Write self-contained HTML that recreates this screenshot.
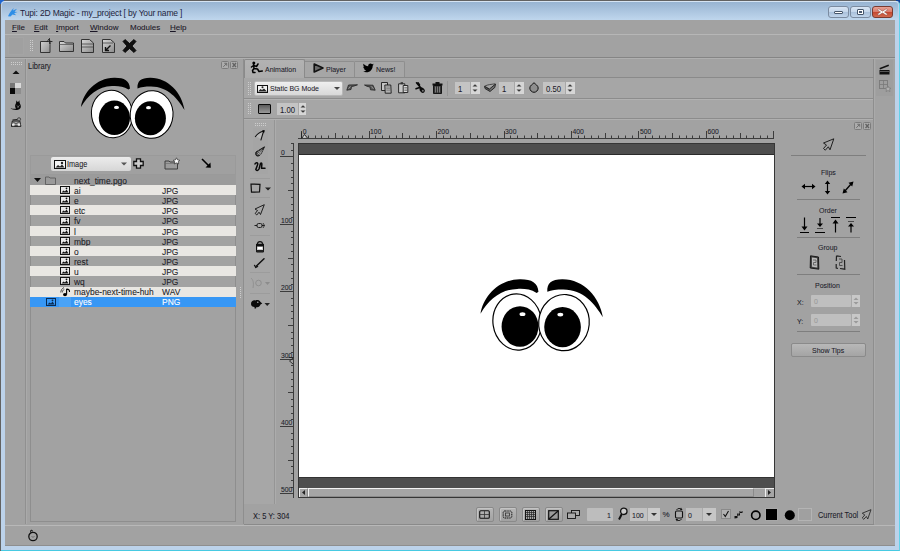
<!DOCTYPE html>
<html><head><meta charset="utf-8">
<style>
*{margin:0;padding:0;box-sizing:border-box}
html,body{width:900px;height:551px;overflow:hidden;background:#626262}
body{font-family:"Liberation Sans",sans-serif;font-size:8px;color:#1c1c26;position:relative}
.a{position:absolute}
.t{position:absolute;white-space:pre;line-height:1;-webkit-text-stroke:0.07px currentColor}
svg{position:absolute;overflow:visible}
#win{left:1px;top:1px;width:899px;height:550px;background:#bcd2ea;border-radius:4px 4px 0 0;border-top:1px solid #d6e4f3;border-right:1px solid #62d2ea;border-bottom:1px solid #48cae2}
#title{left:2px;top:2px;width:896px;height:18px;background:linear-gradient(#98b4d2,#bfd6ed);border-radius:3px 3px 0 0}
#client{left:5px;top:20px;width:890px;height:526px;background:#a2a2a2}
.hl{height:1px}
.vl{width:1px}
.grip{background-image:radial-gradient(circle,#cfcfcf 0.6px,transparent 0.9px);background-size:2px 2px}
.mn{top:24px;color:#1a1626}
u{text-decoration:underline;text-underline-offset:1px}
.rl{font-size:6.8px;color:#1c1c2a;text-decoration:none}
.pl{font-size:7.84px;color:#1c1c2a;margin-top:-0.5px;transform:scaleX(0.893);transform-origin:0 0}
.row{position:absolute;left:30px;width:206px;height:10px}
.row .t{top:1.8px;font-size:8.45px}
</style></head><body>
<svg width="0" height="0" style="left:0;top:0"><defs><pattern id="gp" width="2" height="2" patternUnits="userSpaceOnUse"><rect x="0" y="0" width="1" height="1" fill="#cdcdcd"/></pattern></defs></svg>
<div class="a" style="left:-3px;top:-3px;width:7px;height:7px;border-radius:50%;background:#1f66d0"></div>
<div class="a" style="left:896px;top:-3px;width:7px;height:6px;border-radius:50%;background:#0c3f96"></div>
<div id="win" class="a"></div>
<div id="title" class="a"></div>
<!-- app icon -->
<svg style="left:6.5px;top:7.5px" width="11" height="9" viewBox="0 0 13 11"><path d="M1 10 C3 6 5 3 8 0 L7 3 L12 1 L9 4.5 L12.5 5 L8.5 6.5 L11 9 L6.5 8 L4 10.5 Z" fill="#2e8ee6"/></svg>
<div class="t" style="left:20px;top:8.5px;font-size:8.5px;letter-spacing:-0.17px;color:#1e1e3c;-webkit-text-stroke:0">Tupi: 2D Magic - my_project [ by Your name ]</div>
<!-- title buttons -->
<div class="a" style="left:828px;top:6px;width:21px;height:12px;border:1px solid #7b8ba0;border-radius:3px;background:linear-gradient(#d9e6f4 0,#c3d5ea 50%,#a9c0da 51%,#c0d4ea 100%)"></div>
<div class="a" style="left:834px;top:11px;width:9px;height:3px;background:#fff;border:1px solid #46566a;border-radius:1px"></div>
<div class="a" style="left:850px;top:6px;width:21px;height:12px;border:1px solid #7b8ba0;border-radius:3px;background:linear-gradient(#d9e6f4 0,#c3d5ea 50%,#a9c0da 51%,#c0d4ea 100%)"></div>
<div class="a" style="left:857px;top:9px;width:7px;height:6px;background:#fff;border:1px solid #46566a;border-radius:1px"></div>
<div class="a" style="left:859px;top:11px;width:3px;height:2px;background:#4a5a70"></div>
<div class="a" style="left:872px;top:6px;width:21px;height:12px;border:1px solid #7a3a30;border-radius:3px;background:linear-gradient(#e8a294 0,#d8796a 50%,#c4452e 51%,#d06a50 100%)"></div>
<svg style="left:877px;top:8px" width="11" height="8" viewBox="0 0 11 8"><path d="M1.8 0.8 L5.5 3.2 L9.2 0.8 L10.5 2 L7.5 4 L10.5 6 L9.2 7.3 L5.5 4.9 L1.8 7.3 L0.5 6 L3.5 4 L0.5 2 Z" fill="#fff" stroke="#7a4038" stroke-width="0.5" stroke-linejoin="round"/></svg>

<div id="client" class="a"></div>

<!-- menu bar -->
<div class="a hl" style="left:5px;top:34px;width:890px;background:#b6b6b6"></div>
<div class="t mn" style="left:12px"><u>F</u>ile</div>
<div class="t mn" style="left:34px"><u>E</u>dit</div>
<div class="t mn" style="left:56px"><u>I</u>mport</div>
<div class="t mn" style="left:90px"><u>W</u>indow</div>
<div class="t mn" style="left:130px">Modules</div>
<div class="t mn" style="left:170px"><u>H</u>elp</div>

<!-- toolbar -->
<div class="a" style="left:8px;top:37px;width:16px;height:18px;background:#a0a0a0;border:1px solid #a4a4a4"></div>
<svg style="left:30px;top:40px" width="4" height="12"><rect width="4" height="12" fill="url(#gp)"/></svg>


<!-- toolbar icons -->
<svg style="left:39px;top:38px" width="15" height="16" viewBox="0 0 15 16"><defs><linearGradient id="gd" x1="0" y1="0" x2="1" y2="1"><stop offset="0" stop-color="#d8d8d8"/><stop offset="1" stop-color="#8a8a8a"/></linearGradient></defs><path d="M1.5 3.5 H9 V2 L10 1 L10.5 3 L12.5 3.5 L10.8 4.4 L11.5 6 L11 6.5 V14.5 H1.5 Z" fill="url(#gd)" stroke="#333" stroke-width="1"/><path d="M10.5 0 V6 M7.5 3.5 H13.5" stroke="#222" stroke-width="0.8"/></svg>
<svg style="left:58px;top:39px" width="17" height="14" viewBox="0 0 17 14"><path d="M1.5 2.5 H6 L7.5 4 H15.5 V12.5 H1.5 Z" fill="url(#gd)" stroke="#333" stroke-width="1"/><path d="M1.5 5.5 H15.5" stroke="#555" stroke-width="0.8"/></svg>
<svg style="left:80px;top:38px" width="15" height="16" viewBox="0 0 15 16"><path d="M1.5 1.5 H9.5 L13.5 5 V14.5 H1.5 Z" fill="url(#gd)" stroke="#333" stroke-width="1"/><path d="M2 6 H13 M2 9 H13" stroke="#444" stroke-width="0.8"/></svg>
<svg style="left:101px;top:38px" width="15" height="16" viewBox="0 0 15 16"><path d="M1.5 1.5 H9.5 L13.5 5 V14.5 H1.5 Z" fill="url(#gd)" stroke="#333" stroke-width="1"/><path d="M2 5 H12" stroke="#444" stroke-width="0.8"/><path d="M9.5 7.5 L5 12 M4.5 9 V12.5 H8" stroke="#111" stroke-width="1.4" fill="none"/></svg>
<svg style="left:122px;top:38px" width="15" height="16" viewBox="0 0 15 16"><path d="M3 1.5 L7.5 5.5 L12 1.5 L14 3.5 L10 8 L14 12.5 L12 14.5 L7.5 10.5 L3 14.5 L1 12.5 L5 8 L1 3.5 Z" fill="#111" stroke="#000" stroke-width="0.8" stroke-linejoin="round"/></svg>

<!-- left dock -->
<div class="a vl" style="left:25px;top:59px;height:465px;background:#909090"></div>
<div class="a vl" style="left:26px;top:59px;height:465px;background:#aaaaaa"></div>
<svg style="left:11px;top:62px" width="12" height="4"><rect width="12" height="4" fill="url(#gp)"/></svg>
<svg style="left:12px;top:70px" width="8" height="5" viewBox="0 0 8 5"><path d="M0.5 4 L4 0.5 L7.5 4 Z" fill="#111"/></svg>
<div class="a" style="left:10px;top:83px;width:5px;height:5px;background:#777"></div>
<div class="a" style="left:15px;top:83px;width:6px;height:5px;background:#dadada"></div>
<div class="a" style="left:10px;top:88px;width:5px;height:6px;background:#0a0a0a"></div>
<div class="a" style="left:15px;top:88px;width:6px;height:6px;background:#8e8e8e"></div>
<svg style="left:10px;top:100px" width="12" height="11" viewBox="0 0 12 11"><path d="M0.5 8 C2 9.8 5.5 10.3 8 9.8 C10 9.3 11.2 7.8 10.8 5.8 C10.5 4.4 9.8 3.7 9.6 2.6 L9.4 0.3 L8.4 1.8 L7.2 1.8 L6.4 0.3 L6.1 2.8 C5.9 4 5.1 4.8 5.1 6 C5.1 7.2 5.6 8 6.1 8.6 C4.2 9 2.5 8.9 0.5 8 Z" fill="#0a0a0a"/><path d="M7 5.5 L8 6.8 L9.5 5.5 M8 6.8 V8" stroke="#8a8a8a" stroke-width="0.8" fill="none"/></svg>
<svg style="left:10px;top:117px" width="12" height="10" viewBox="0 0 12 10"><path d="M1.5 9 L2.3 4 L9.8 4 L10.8 9 Z" fill="none" stroke="#1a1a1a" stroke-width="1"/><path d="M2.5 3 L7.5 2.5" stroke="#1a1a1a" stroke-width="1.1"/><circle cx="9" cy="2.3" r="1.6" fill="#9a9a9a" stroke="#333" stroke-width="0.8"/><path d="M2.5 4.5 L6 7 L9.5 4.5" fill="none" stroke="#333" stroke-width="0.7"/><circle cx="3.3" cy="8" r="1.4" fill="#e8e8e8"/><circle cx="9" cy="8" r="1.4" fill="#e8e8e8"/><path d="M1 9.3 H11.2" stroke="#1a1a1a" stroke-width="0.9"/></svg>

<!-- library panel -->
<div class="t" style="left:28px;top:62.00px;font-size:8.40px;transform:scaleX(0.893);transform-origin:0 0">Library</div>
<div class="a" style="left:221px;top:61px;width:8px;height:8px;border:1px solid #7c7c7c;border-radius:1.5px;background:#acacac"></div>
<div class="a" style="left:230px;top:61px;width:8px;height:8px;border:1px solid #7c7c7c;border-radius:1.5px;background:#acacac"></div>
<svg style="left:221px;top:61px" width="18" height="8" viewBox="0 0 18 8"><path d="M2.3 5.8 L5.7 2.3 M3.3 2.3 H5.7 V4.7" stroke="#6e6e6e" stroke-width="1" fill="none"/><path d="M11.5 2 L15 6 M15 2 L11.5 6" stroke="#626262" stroke-width="1.3"/></svg>
<div class="a vl" style="left:243px;top:59px;height:465px;background:#8e8e8e"></div>

<svg id="eyesL" style="left:78px;top:76px" width="110" height="65" viewBox="0 0 110 65">
<g id="eyes">
<path d="M3 31 C5 17 18 2 36 1.8 C46 1.6 51.5 4.5 52 12.5 L50.5 13.5 C45 10 40 9.8 34 10 C20 10.5 10 19 3 31 Z" fill="#000"/>
<path d="M59.5 12.5 C59 5 63 2 72 1.8 C90 1.5 104 17 106.5 34 C100 23 90 10.5 73 10.5 C67 10.5 63 11 59.5 12.5 Z" fill="#000"/>
<ellipse cx="34" cy="38" rx="20.5" ry="23.8" transform="rotate(-8 34 38)" fill="#fff" stroke="#000" stroke-width="1"/>
<ellipse cx="73.6" cy="38.5" rx="21.4" ry="23.8" transform="rotate(5 73.6 38.5)" fill="#fff" stroke="#000" stroke-width="1"/>
<ellipse cx="36.4" cy="41.8" rx="15.6" ry="17.2" fill="#000"/>
<ellipse cx="72.4" cy="42.3" rx="15.5" ry="17" fill="#000"/>
<ellipse cx="38.5" cy="31.4" rx="2.5" ry="1.6" fill="#fff"/>
<ellipse cx="70.5" cy="31.7" rx="2.5" ry="1.6" fill="#fff"/>
</g></svg>

<div class="a" style="left:30px;top:155px;width:206px;height:20px;border:1px solid #9a9a9a;background:#a0a0a0"></div>
<div class="a" style="left:51px;top:157px;width:80px;height:14px;border-radius:2px;background:linear-gradient(#ececec,#d6d6d6)"></div>
<svg style="left:54px;top:160px" width="12" height="9" viewBox="0 0 12 9"><rect x="0.5" y="0.5" width="11" height="8" fill="#f4f4f4" stroke="#111"/><path d="M1.5 7.5 L4 5 L6 6.5 L8 4.5 L10.5 7.5 Z" fill="#222"/><circle cx="8" cy="3" r="1.2" fill="#222"/></svg>
<div class="t" style="left:67px;top:161.00px;font-size:8.18px;transform:scaleX(0.893);transform-origin:0 0">Image</div>
<svg style="left:121px;top:162px" width="6" height="4" viewBox="0 0 6 4"><path d="M0 0.5 H6 L3 3.5 Z" fill="#555"/></svg>
<svg style="left:133px;top:158px" width="11" height="11" viewBox="0 0 11 11"><path d="M3.5 0.8 H7.5 V3.5 H10.2 V7.5 H7.5 V10.2 H3.5 V7.5 H0.8 V3.5 H3.5 Z" fill="#ccc" stroke="#111" stroke-width="1.3"/></svg>
<svg style="left:164px;top:157px" width="17" height="13" viewBox="0 0 17 13"><path d="M1 4 H5 L6 5 H13.5 V12 H1 Z" fill="#9c9c9c" stroke="#333" stroke-width="0.9"/><path d="M1.3 6.5 H13.2" stroke="#666" stroke-width="0.6"/><path d="M12.5 0.8 L13.6 3 L15.8 3.3 L14.2 4.8 L14.7 7 L12.5 5.9 L10.3 7 L10.8 4.8 L9.2 3.3 L11.4 3 Z" fill="#fff" stroke="#333" stroke-width="0.7"/></svg>
<svg style="left:201px;top:158px" width="11" height="11" viewBox="0 0 11 11"><path d="M1 1 L8 8" stroke="#000" stroke-width="1.6"/><path d="M4.5 9.5 L9.8 9.8 L9.5 4.5 Z" fill="#000"/></svg>

<!-- tree -->
<div class="a" style="left:30px;top:175px;width:206px;height:347px;border:1px solid #8e8e8e;border-top:none"></div>
<div class="a" style="left:30px;top:175px;width:206px;height:10px;background:#9b9b9b"></div>
<svg style="left:34px;top:178px" width="7" height="4" viewBox="0 0 7 4"><path d="M0 0 H7 L3.5 4 Z" fill="#111"/></svg>
<svg style="left:45px;top:176px" width="11" height="9" viewBox="0 0 11 9"><path d="M0.5 1 H4 L5 2 H10.5 V8.5 H0.5 Z" fill="#9a9a9a" stroke="#555" stroke-width="0.8"/></svg>
<div class="t" style="left:74px;top:177px;font-size:8.45px;z-index:2">next_time.pgo</div>

<div class="row" style="top:185.20px;background:#e9e7e3"><svg style="left:30px;top:1px" width="10" height="8" viewBox="0 0 10 8"><rect x="0.5" y="0.5" width="9" height="7" fill="#e8e8e8" stroke="#111"/><path d="M1.5 6.5 L3.5 4.5 L5 5.5 L6.5 3.5 L8.5 6.5 Z" fill="#111"/><circle cx="6.5" cy="2.3" r="0.9" fill="#111"/></svg><div class="t" style="left:44px;color:#1c1c26">ai</div><div class="t" style="left:132px;color:#1c1c26">JPG</div></div>
<div class="row" style="top:195.33px;background:transparent"><svg style="left:30px;top:1px" width="10" height="8" viewBox="0 0 10 8"><rect x="0.5" y="0.5" width="9" height="7" fill="#e8e8e8" stroke="#111"/><path d="M1.5 6.5 L3.5 4.5 L5 5.5 L6.5 3.5 L8.5 6.5 Z" fill="#111"/><circle cx="6.5" cy="2.3" r="0.9" fill="#111"/></svg><div class="t" style="left:44px;color:#1c1c26">e</div><div class="t" style="left:132px;color:#1c1c26">JPG</div></div>
<div class="row" style="top:205.46px;background:#e9e7e3"><svg style="left:30px;top:1px" width="10" height="8" viewBox="0 0 10 8"><rect x="0.5" y="0.5" width="9" height="7" fill="#e8e8e8" stroke="#111"/><path d="M1.5 6.5 L3.5 4.5 L5 5.5 L6.5 3.5 L8.5 6.5 Z" fill="#111"/><circle cx="6.5" cy="2.3" r="0.9" fill="#111"/></svg><div class="t" style="left:44px;color:#1c1c26">etc</div><div class="t" style="left:132px;color:#1c1c26">JPG</div></div>
<div class="row" style="top:215.59px;background:transparent"><svg style="left:30px;top:1px" width="10" height="8" viewBox="0 0 10 8"><rect x="0.5" y="0.5" width="9" height="7" fill="#e8e8e8" stroke="#111"/><path d="M1.5 6.5 L3.5 4.5 L5 5.5 L6.5 3.5 L8.5 6.5 Z" fill="#111"/><circle cx="6.5" cy="2.3" r="0.9" fill="#111"/></svg><div class="t" style="left:44px;color:#1c1c26">fv</div><div class="t" style="left:132px;color:#1c1c26">JPG</div></div>
<div class="row" style="top:225.72px;background:#e9e7e3"><svg style="left:30px;top:1px" width="10" height="8" viewBox="0 0 10 8"><rect x="0.5" y="0.5" width="9" height="7" fill="#e8e8e8" stroke="#111"/><path d="M1.5 6.5 L3.5 4.5 L5 5.5 L6.5 3.5 L8.5 6.5 Z" fill="#111"/><circle cx="6.5" cy="2.3" r="0.9" fill="#111"/></svg><div class="t" style="left:44px;color:#1c1c26">l</div><div class="t" style="left:132px;color:#1c1c26">JPG</div></div>
<div class="row" style="top:235.85px;background:transparent"><svg style="left:30px;top:1px" width="10" height="8" viewBox="0 0 10 8"><rect x="0.5" y="0.5" width="9" height="7" fill="#e8e8e8" stroke="#111"/><path d="M1.5 6.5 L3.5 4.5 L5 5.5 L6.5 3.5 L8.5 6.5 Z" fill="#111"/><circle cx="6.5" cy="2.3" r="0.9" fill="#111"/></svg><div class="t" style="left:44px;color:#1c1c26">mbp</div><div class="t" style="left:132px;color:#1c1c26">JPG</div></div>
<div class="row" style="top:245.98px;background:#e9e7e3"><svg style="left:30px;top:1px" width="10" height="8" viewBox="0 0 10 8"><rect x="0.5" y="0.5" width="9" height="7" fill="#e8e8e8" stroke="#111"/><path d="M1.5 6.5 L3.5 4.5 L5 5.5 L6.5 3.5 L8.5 6.5 Z" fill="#111"/><circle cx="6.5" cy="2.3" r="0.9" fill="#111"/></svg><div class="t" style="left:44px;color:#1c1c26">o</div><div class="t" style="left:132px;color:#1c1c26">JPG</div></div>
<div class="row" style="top:256.11px;background:transparent"><svg style="left:30px;top:1px" width="10" height="8" viewBox="0 0 10 8"><rect x="0.5" y="0.5" width="9" height="7" fill="#e8e8e8" stroke="#111"/><path d="M1.5 6.5 L3.5 4.5 L5 5.5 L6.5 3.5 L8.5 6.5 Z" fill="#111"/><circle cx="6.5" cy="2.3" r="0.9" fill="#111"/></svg><div class="t" style="left:44px;color:#1c1c26">rest</div><div class="t" style="left:132px;color:#1c1c26">JPG</div></div>
<div class="row" style="top:266.24px;background:#e9e7e3"><svg style="left:30px;top:1px" width="10" height="8" viewBox="0 0 10 8"><rect x="0.5" y="0.5" width="9" height="7" fill="#e8e8e8" stroke="#111"/><path d="M1.5 6.5 L3.5 4.5 L5 5.5 L6.5 3.5 L8.5 6.5 Z" fill="#111"/><circle cx="6.5" cy="2.3" r="0.9" fill="#111"/></svg><div class="t" style="left:44px;color:#1c1c26">u</div><div class="t" style="left:132px;color:#1c1c26">JPG</div></div>
<div class="row" style="top:276.37px;background:transparent"><svg style="left:30px;top:1px" width="10" height="8" viewBox="0 0 10 8"><rect x="0.5" y="0.5" width="9" height="7" fill="#e8e8e8" stroke="#111"/><path d="M1.5 6.5 L3.5 4.5 L5 5.5 L6.5 3.5 L8.5 6.5 Z" fill="#111"/><circle cx="6.5" cy="2.3" r="0.9" fill="#111"/></svg><div class="t" style="left:44px;color:#1c1c26">wq</div><div class="t" style="left:132px;color:#1c1c26">JPG</div></div>
<div class="row" style="top:286.50px;background:#e9e7e3"><svg style="left:30px;top:0.3px" width="11" height="10" viewBox="0 0 11 10"><path d="M0.8 5.5 C0.8 3.5 1.8 1.5 4 0.6 M2.4 5.4 C2.4 4 3 3 4.3 2.3" fill="none" stroke="#222" stroke-width="0.8"/><ellipse cx="5" cy="7.6" rx="2" ry="1.6" fill="#000"/><path d="M6.6 7.5 V2.2 C8.5 2 9.8 3 9.5 5" fill="none" stroke="#000" stroke-width="1.1"/></svg><div class="t" style="left:44px;color:#1c1c26">maybe-next-time-huh</div><div class="t" style="left:132px;color:#1c1c26">WAV</div></div>
<div class="row" style="top:296.63px;background:#3797f5"><svg style="left:16px;top:1px" width="10" height="8" viewBox="0 0 10 8"><rect x="0.5" y="0.5" width="9" height="7" fill="#3797f5" stroke="#0a2a50"/><path d="M1.5 6.5 L3.5 4.5 L5 5.5 L6.5 3.5 L8.5 6.5 Z" fill="#0a2a50"/><circle cx="6.5" cy="2.3" r="0.9" fill="#0a2a50"/></svg><div class="a" style="left:29px;top:0;width:12px;height:10px;background:#4aa3f7"></div><div class="t" style="left:44px;color:#fff">eyes</div><div class="t" style="left:132px;color:#fff">PNG</div></div>


<!-- ===== center panel ===== -->
<div class="a vl" style="left:873px;top:59px;height:465px;background:#8e8e8e"></div>
<!-- tabs -->
<div class="a hl" style="left:244px;top:77px;width:630px;background:#8a8a8a"></div>
<div class="a" style="left:244px;top:59px;width:61px;height:19px;background:linear-gradient(#b2b2b2,#acacac);border:1px solid #8a8a8a;border-bottom:none;border-radius:2px 2px 0 0"></div>
<div class="a" style="left:305px;top:61px;width:50px;height:16px;background:#a6a6a6;border:1px solid #8e8e8e;border-bottom:none;border-left:none;border-radius:0 2px 0 0"></div>
<div class="a" style="left:355px;top:61px;width:50px;height:16px;background:#a6a6a6;border:1px solid #8e8e8e;border-bottom:none;border-left:none;border-radius:0 2px 0 0"></div>
<svg style="left:250px;top:61px" width="14" height="13" viewBox="0 0 14 13"><circle cx="3.8" cy="1.9" r="1.5" fill="#000"/><path d="M3.6 3.5 L4 7.5 M3.8 4.5 L6.5 5.5 L8 3 M3.5 4.5 L1.5 6 M4 7.5 L2.5 9.5 L3 11.5 L5 11.5 M4 7.5 L7.5 8 L9 10.5 L12.3 10" fill="none" stroke="#000" stroke-width="1.5" stroke-linecap="round" stroke-linejoin="round"/></svg>
<div class="t" style="left:265px;top:66.00px;font-size:7.84px;color:#1c1c2a;transform:scaleX(0.893);transform-origin:0 0">Animation</div>
<svg style="left:313px;top:63px" width="11" height="10" viewBox="0 0 11 10"><path d="M1.2 1 L10 5 L1.2 9 Z" fill="#6a6a6a" stroke="#111" stroke-width="1.6" stroke-linejoin="round"/></svg>
<div class="t" style="left:326px;top:66.00px;font-size:7.84px;color:#1c1c2a;transform:scaleX(0.893);transform-origin:0 0">Player</div>
<svg style="left:363px;top:63px" width="11" height="10" viewBox="0 0 24 20"><path d="M23.6 2.4c-.9.4-1.8.6-2.8.8 1-.6 1.8-1.6 2.1-2.7-.9.6-2 1-3.1 1.2C18.9.6 17.6 0 16.2 0c-2.7 0-4.9 2.2-4.9 4.9 0 .4 0 .8.1 1.1C7.3 5.8 3.7 3.9 1.3.9c-.4.7-.7 1.6-.7 2.5 0 1.7.9 3.2 2.2 4.1-.8 0-1.6-.2-2.2-.6v.1c0 2.4 1.7 4.4 3.9 4.8-.4.1-.8.2-1.3.2-.3 0-.6 0-.9-.1.6 2 2.4 3.4 4.6 3.4-1.7 1.3-3.8 2.1-6.1 2.1-.4 0-.8 0-1.2-.1 2.2 1.4 4.8 2.2 7.5 2.2 9.1 0 14-7.5 14-14v-.6c1-.7 1.8-1.6 2.5-2.5z" fill="#000"/></svg>
<div class="t" style="left:376px;top:66.00px;font-size:7.84px;color:#1c1c2a;transform:scaleX(0.893);transform-origin:0 0">News!</div>

<!-- toolbar row 1 -->
<div class="a hl" style="left:244px;top:78px;width:629px;background:#b4b4b4"></div>
<div class="a" style="left:244px;top:78px;width:629px;height:20px;background:#a6a6a6"></div>
<div class="a hl" style="left:244px;top:98px;width:629px;background:#8c8c8c"></div>
<div class="a hl" style="left:244px;top:99px;width:629px;background:#b2b2b2"></div>
<svg style="left:248px;top:82px" width="4" height="13"><rect width="4" height="13" fill="url(#gp)"/></svg>
<div class="a" style="left:254px;top:81px;width:89px;height:15px;border-radius:2px;background:linear-gradient(#efefef,#d8d8d8);border:1px solid #b8b8b8"></div>
<svg style="left:257px;top:85px" width="11" height="8" viewBox="0 0 11 8"><rect x="0.5" y="0.5" width="10" height="7" fill="#f2f2f2" stroke="#111"/><path d="M1 6.5 L3.5 4 L5 5 L7 3.5 L10 6.5 Z" fill="#222"/><circle cx="5.5" cy="2.2" r="1" fill="#222"/></svg>
<div class="t" style="left:270px;top:85.00px;font-size:7.84px;color:#1c1c2a;transform:scaleX(0.893);transform-origin:0 0">Static BG Mode</div>
<svg style="left:334px;top:87px" width="6" height="3" viewBox="0 0 6 3"><path d="M0 0 H6 L3 3 Z" fill="#444"/></svg>
<svg style="left:346px;top:84px" width="12" height="7" viewBox="0 0 12 7"><path d="M2.5 1 L11.5 0.8 L7.5 2.2 L5.5 2.5 L5 5.5 L0.8 6.2 Z" fill="#5a5a5a" stroke="#222" stroke-width="0.8" stroke-linejoin="round"/><path d="M2.5 4.5 L4.5 2.5" stroke="#bbb" stroke-width="0.6"/></svg>
<svg style="left:364px;top:84px" width="12" height="7" viewBox="0 0 12 7"><path d="M0.5 1 L9 1.2 L9.8 3 L11.2 6.2 L6.5 5.8 L6 3 L3 2.3 Z" fill="#5a5a5a" stroke="#222" stroke-width="0.8" stroke-linejoin="round"/><path d="M7.5 2.5 L9.5 4.8" stroke="#bbb" stroke-width="0.6"/></svg>
<svg style="left:381px;top:82px" width="12" height="12" viewBox="0 0 12 12"><path d="M0.5 0.5 H6.5 V8.5 H0.5 Z" fill="#c4c4c4" stroke="#1a1a1a" stroke-width="0.9"/><path d="M3.8 3 H9.8 L10.2 11.2 H4.2 Z" fill="#b0b0b0" stroke="#1a1a1a" stroke-width="0.9"/><path d="M5.2 5 H9 M5.3 6.6 H9.1 M5.4 8.2 H9.2" stroke="#666" stroke-width="0.6"/></svg>
<svg style="left:398px;top:82px" width="11" height="12" viewBox="0 0 11 12"><path d="M0.6 1.8 H6.8 V10.8 H0.6 Z" fill="#c8c8c8" stroke="#1a1a1a" stroke-width="0.9"/><rect x="2.6" y="0.2" width="2.4" height="2" fill="#333"/><path d="M5.2 3.5 H9.8 V10.5 H5.2 Z" fill="#d8d8d8" stroke="#1a1a1a" stroke-width="0.9"/><path d="M6.3 5.5 H9 M6.3 7 H9 M6.3 8.5 H9" stroke="#555" stroke-width="0.6"/></svg>
<svg style="left:415px;top:82px" width="11" height="12" viewBox="0 0 11 12"><path d="M1.5 0.8 L5.5 5.5 M5.3 5.3 L1 6.8 M3 0.8 L4.5 3" fill="none" stroke="#0a0a0a" stroke-width="1.6" stroke-linecap="round"/><path d="M4.5 5 C6 4.5 9.5 6 9.8 8.5 C10 10.5 8 11.5 6.5 10.5 C5 9.5 4 7 4.5 5 Z" fill="#0a0a0a"/><circle cx="7.8" cy="8.8" r="1" fill="#777"/></svg>
<svg style="left:432px;top:82px" width="11" height="12" viewBox="0 0 11 12"><rect x="0.5" y="1.5" width="10" height="2" fill="#111"/><rect x="3.5" y="0" width="4" height="2" fill="#111"/><path d="M1.5 3.5 H9.5 V11.5 H1.5 Z" fill="#333" stroke="#000" stroke-width="0.8"/><path d="M3.5 4.5 V10.5 M5.5 4.5 V10.5 M7.5 4.5 V10.5" stroke="#999" stroke-width="0.7"/></svg>
<div class="a vl" style="left:447px;top:81px;height:15px;background:#959595"></div>
<div class="a" style="left:455px;top:82px;width:15px;height:12px;background:#c4c4c4"></div><div class="a" style="left:470px;top:82px;width:10px;height:12px;background:#d6d6d6;border-left:1px solid #a8a8a8"></div><svg style="left:472px;top:84px" width="6" height="8" viewBox="0 0 6 8"><path d="M0.5 2.6 L3 0.2 L5.5 2.6 Z M0.5 5.4 L3 7.8 L5.5 5.4 Z" fill="#3a3a3a"/></svg><div class="t" style="left:458px;top:85.00px;font-size:8.62px;color:#1c1c2a;transform:scaleX(0.893);transform-origin:0 0">1</div>
<svg style="left:484px;top:83px" width="12" height="9" viewBox="0 0 12 9"><path d="M0.5 3.2 L5.5 6 L11.5 1 L10.8 4.5 L6 8.5 L1 5.5 Z" fill="#707070" stroke="#111" stroke-width="0.8" stroke-linejoin="round"/><path d="M1 3 C4 1.5 7 1.5 11 0.8 M1.5 4.3 L5.8 7" fill="none" stroke="#222" stroke-width="0.7"/></svg>
<div class="a" style="left:499px;top:82px;width:15px;height:12px;background:#c4c4c4"></div><div class="a" style="left:514px;top:82px;width:10px;height:12px;background:#d6d6d6;border-left:1px solid #a8a8a8"></div><svg style="left:516px;top:84px" width="6" height="8" viewBox="0 0 6 8"><path d="M0.5 2.6 L3 0.2 L5.5 2.6 Z M0.5 5.4 L3 7.8 L5.5 5.4 Z" fill="#3a3a3a"/></svg><div class="t" style="left:502px;top:85.00px;font-size:8.62px;color:#1c1c2a;transform:scaleX(0.893);transform-origin:0 0">1</div>
<svg style="left:529px;top:82px" width="10" height="11" viewBox="0 0 10 11"><path d="M5 0.7 C6.2 2.2 9.2 3.5 9.2 6 C9.2 8.5 7 10.3 5 10.3 C3 10.3 0.8 8.5 0.8 6 C0.8 3.5 3.8 2.2 5 0.7 Z" fill="#8e8e8e" stroke="#111" stroke-width="1"/></svg>
<div class="a" style="left:543px;top:82px;width:22px;height:12px;background:#c4c4c4"></div><div class="a" style="left:565px;top:82px;width:10px;height:12px;background:#d6d6d6;border-left:1px solid #a8a8a8"></div><svg style="left:567px;top:84px" width="6" height="8" viewBox="0 0 6 8"><path d="M0.5 2.6 L3 0.2 L5.5 2.6 Z M0.5 5.4 L3 7.8 L5.5 5.4 Z" fill="#3a3a3a"/></svg><div class="t" style="left:546px;top:85.00px;font-size:8.62px;color:#1c1c2a;transform:scaleX(0.893);transform-origin:0 0">0.50</div>

<!-- toolbar row 2 -->
<div class="a" style="left:244px;top:100px;width:629px;height:18px;background:#a6a6a6"></div>
<div class="a hl" style="left:244px;top:118px;width:629px;background:#8c8c8c"></div>
<div class="a hl" style="left:244px;top:119px;width:629px;background:#b0b0b0"></div>
<svg style="left:248px;top:103px" width="4" height="12"><rect width="4" height="12" fill="url(#gp)"/></svg>
<div class="a" style="left:258px;top:104px;width:13px;height:10px;background:linear-gradient(#5a5a5a,#9a9a9a);border:1.5px solid #0a0a0a;border-radius:1px"></div>
<div class="a" style="left:277px;top:103px;width:21px;height:12px;background:#c4c4c4"></div><div class="a" style="left:298px;top:103px;width:8px;height:12px;background:#d6d6d6;border-left:1px solid #a8a8a8"></div><svg style="left:300px;top:105px" width="6" height="8" viewBox="0 0 6 8"><path d="M0.5 2.6 L3 0.2 L5.5 2.6 Z M0.5 5.4 L3 7.8 L5.5 5.4 Z" fill="#3a3a3a"/></svg><div class="t" style="left:280px;top:106.00px;font-size:8.62px;color:#1c1c2a;transform:scaleX(0.893);transform-origin:0 0">1.00</div>


<!-- ===== tool column ===== -->
<svg style="left:240px;top:287px" width="2" height="12"><rect width="2" height="12" fill="url(#gp)"/></svg>
<div class="a" style="left:244px;top:120px;width:30px;height:384px;background:#a7a7a7"></div>
<div class="a vl" style="left:274px;top:120px;height:384px;background:#959595"></div>
<div class="a vl" style="left:275px;top:120px;height:384px;background:#acacac"></div>
<svg style="left:255px;top:123px" width="12" height="3"><rect width="12" height="3" fill="url(#gp)"/></svg>
<div class="a" style="left:253px;top:128px;width:15px;height:46px;background:#a5a5a5"></div>
<svg style="left:254px;top:129px" width="12" height="13" viewBox="0 0 12 13"><path d="M1.2 8 C3 5 6 3 9.5 2 L7 11.3 C6 9 4 7.5 1.2 8 Z" fill="#b8b8b8"/><path d="M1.2 8 C3 5 6 3 9.5 2" fill="none" stroke="#111" stroke-width="1.1"/><path d="M9.8 1.5 L6.8 11.3" fill="none" stroke="#111" stroke-width="1.1"/><path d="M8 1.6 L10.8 1.2 L10 4.2 Z" fill="#000"/></svg>
<svg style="left:255px;top:146px" width="10" height="11" viewBox="0 0 10 11"><path d="M9.5 0.8 L1 6 C0.3 7.5 0.6 9.5 2 10 C3.5 10.3 5 9.5 6 8 Z" fill="#3e3e3e" stroke="#111" stroke-width="0.9" stroke-linejoin="round"/><path d="M2 6.5 L5.5 8.5 M3 4.8 L6.5 7 M2.5 9 L6.5 3.5 M4.5 9 L7.5 4" stroke="#c8c8c8" stroke-width="0.6"/></svg>
<svg style="left:254px;top:161px" width="12" height="11" viewBox="0 0 12 11"><path d="M1 3 C2 1 4.5 1.2 3.5 4 L1.8 8.5 C2.5 10 4 9.8 5 8 L6.5 2.5 C7.5 1.5 8 2.5 7.8 4 L7.5 7.3 L11 7.3" fill="none" stroke="#0a0a0a" stroke-width="1.5" stroke-linecap="round" stroke-linejoin="round"/></svg>
<div class="a hl" style="left:250px;top:178px;width:20px;background:#9c9c9c"></div>
<svg style="left:250px;top:183px" width="11" height="10" viewBox="0 0 11 10"><path d="M1 1 L10 1.3 L9.5 9 L1.5 9.2 Z" fill="none" stroke="#111" stroke-width="1.2"/></svg>
<svg style="left:265px;top:187px" width="6" height="4" viewBox="0 0 6 4"><path d="M0 0.5 H6 L3 3.5 Z" fill="#222"/></svg>
<div class="a hl" style="left:250px;top:197px;width:20px;background:#9c9c9c"></div>
<svg style="left:254px;top:204px" width="11" height="12" viewBox="0 0 11 12"><path d="M10.3 0.7 L1 5 L3.5 6.5 L1.2 9.5 L2.8 11 L5 8.2 L6.5 10.5 Z" fill="none" stroke="#111" stroke-width="0.9" stroke-linejoin="round"/></svg>
<svg style="left:254px;top:222px" width="11" height="7" viewBox="0 0 11 7"><path d="M0.5 3.5 H3 M8 3.5 H10.5" stroke="#111" stroke-width="0.9"/><rect x="3" y="1.5" width="5" height="4" rx="1.5" fill="none" stroke="#111" stroke-width="0.9"/><path d="M9 1 L10.5 3.5 L9 6" fill="none" stroke="#111" stroke-width="0.7"/></svg>
<div class="a hl" style="left:250px;top:235px;width:20px;background:#9c9c9c"></div>
<svg style="left:255px;top:240px" width="10" height="13" viewBox="0 0 10 13"><path d="M2.5 4 C2.5 0.8 7.5 0.8 7.5 4" fill="none" stroke="#111" stroke-width="1.1"/><rect x="1" y="3.8" width="8" height="2.4" fill="#111"/><path d="M1.5 6 H8.5 V12 H1.5 Z" fill="#d0d0d0" stroke="#111" stroke-width="1"/><rect x="1.5" y="10" width="7" height="2" fill="#222"/><rect x="3" y="7" width="4" height="2" fill="#fff"/></svg>
<svg style="left:253px;top:258px" width="12" height="11" viewBox="0 0 12 11"><path d="M11 0.8 L3.2 8.3" stroke="#111" stroke-width="1.5" stroke-linecap="round"/><path d="M1.5 7.3 L2.8 9.6 L4.6 8.6" fill="none" stroke="#111" stroke-width="1.2" stroke-linecap="round" stroke-linejoin="round"/></svg>
<div class="a hl" style="left:250px;top:272px;width:20px;background:#9c9c9c"></div>
<svg style="left:250px;top:277px" width="20" height="12" viewBox="0 0 20 12"><path d="M1 1 C3 3 4 5 3 11" fill="none" stroke="#8c8c8c" stroke-width="0.8"/><circle cx="8.5" cy="6" r="2.8" fill="none" stroke="#8c8c8c" stroke-width="0.9"/><path d="M15 5 H20 L17.5 8 Z" fill="#8c8c8c"/></svg>
<div class="a hl" style="left:250px;top:293px;width:20px;background:#9c9c9c"></div>
<svg style="left:250px;top:299px" width="21" height="10" viewBox="0 0 21 10"><path d="M1 5 C1 2 3.5 0.8 5.5 1.5 C7 0.5 9.5 1 10.5 3 L12.3 4.5 L10.5 5.5 C10 7.5 8 8.5 6.5 8 L6 9.5 L4.5 9.5 L4.5 8 C2.5 7.8 1 7 1 5 Z" fill="#0a0a0a"/><circle cx="7.8" cy="3.3" r="0.8" fill="#aaa"/><path d="M14.5 4 H20 L17.2 7 Z" fill="#222"/></svg>


<!-- ===== rulers ===== -->
<svg style="left:296px;top:126px" width="480" height="14" viewBox="296 126 480 14"><path d="M298 138.5 H774" stroke="#3c3c3c" stroke-width="1"/><path d="M301.5 131 V138.5 M308.5 135.5 V138.5 M315.5 135.5 V138.5 M321.5 135.5 V138.5 M328.5 135.5 V138.5 M335.5 133 V138.5 M342.5 135.5 V138.5 M348.5 135.5 V138.5 M355.5 135.5 V138.5 M362.5 135.5 V138.5 M369.5 131 V138.5 M375.5 135.5 V138.5 M382.5 135.5 V138.5 M389.5 135.5 V138.5 M396.5 135.5 V138.5 M402.5 133 V138.5 M409.5 135.5 V138.5 M416.5 135.5 V138.5 M423.5 135.5 V138.5 M429.5 135.5 V138.5 M436.5 131 V138.5 M443.5 135.5 V138.5 M450.5 135.5 V138.5 M456.5 135.5 V138.5 M463.5 135.5 V138.5 M470.5 133 V138.5 M477.5 135.5 V138.5 M483.5 135.5 V138.5 M490.5 135.5 V138.5 M497.5 135.5 V138.5 M504.5 131 V138.5 M510.5 135.5 V138.5 M517.5 135.5 V138.5 M524.5 135.5 V138.5 M531.5 135.5 V138.5 M537.5 133 V138.5 M544.5 135.5 V138.5 M551.5 135.5 V138.5 M558.5 135.5 V138.5 M564.5 135.5 V138.5 M571.5 131 V138.5 M578.5 135.5 V138.5 M584.5 135.5 V138.5 M591.5 135.5 V138.5 M598.5 135.5 V138.5 M605.5 133 V138.5 M611.5 135.5 V138.5 M618.5 135.5 V138.5 M625.5 135.5 V138.5 M632.5 135.5 V138.5 M638.5 131 V138.5 M645.5 135.5 V138.5 M652.5 135.5 V138.5 M659.5 135.5 V138.5 M665.5 135.5 V138.5 M672.5 133 V138.5 M679.5 135.5 V138.5 M686.5 135.5 V138.5 M692.5 135.5 V138.5 M699.5 135.5 V138.5 M706.5 131 V138.5 M713.5 135.5 V138.5 M719.5 135.5 V138.5 M726.5 135.5 V138.5 M733.5 135.5 V138.5 M740.5 133 V138.5 M746.5 135.5 V138.5 M753.5 135.5 V138.5 M760.5 135.5 V138.5 M767.5 135.5 V138.5 M773.5 131 V138.5" stroke="#3c3c3c" stroke-width="1"/></svg>
<div class="t rl" style="left:302.7px;top:128.5px">0</div><div class="t rl" style="left:370.1px;top:128.5px">100</div><div class="t rl" style="left:437.6px;top:128.5px">200</div><div class="t rl" style="left:505.1px;top:128.5px">300</div><div class="t rl" style="left:572.5px;top:128.5px">400</div><div class="t rl" style="left:640.0px;top:128.5px">500</div><div class="t rl" style="left:707.4px;top:128.5px">600</div>
<svg style="left:278px;top:141px" width="18" height="360" viewBox="278 141 18 360"><path d="M293.5 143 V498" stroke="#3c3c3c" stroke-width="1"/><path d="M291 143.5 H293.5 M291 150.5 H293.5 M280 156.5 H293.5 M291 163.5 H293.5 M291 170.5 H293.5 M291 177.5 H293.5 M291 183.5 H293.5 M288 190.5 H293.5 M291 197.5 H293.5 M291 204.5 H293.5 M291 210.5 H293.5 M291 217.5 H293.5 M280 224.5 H293.5 M291 231.5 H293.5 M291 237.5 H293.5 M291 244.5 H293.5 M291 251.5 H293.5 M288 258.5 H293.5 M291 264.5 H293.5 M291 271.5 H293.5 M291 278.5 H293.5 M291 284.5 H293.5 M280 291.5 H293.5 M291 298.5 H293.5 M291 305.5 H293.5 M291 311.5 H293.5 M291 318.5 H293.5 M288 325.5 H293.5 M291 332.5 H293.5 M291 338.5 H293.5 M291 345.5 H293.5 M291 352.5 H293.5 M280 359.5 H293.5 M291 365.5 H293.5 M291 372.5 H293.5 M291 379.5 H293.5 M291 386.5 H293.5 M288 392.5 H293.5 M291 399.5 H293.5 M291 406.5 H293.5 M291 413.5 H293.5 M291 419.5 H293.5 M280 426.5 H293.5 M291 433.5 H293.5 M291 439.5 H293.5 M291 446.5 H293.5 M291 453.5 H293.5 M288 460.5 H293.5 M291 466.5 H293.5 M291 473.5 H293.5 M291 480.5 H293.5 M291 487.5 H293.5 M280 493.5 H293.5 " stroke="#3c3c3c" stroke-width="1"/></svg>
<div class="t rl" style="left:281px;top:150.4px">0</div><div class="t rl" style="left:281px;top:217.8px">100</div><div class="t rl" style="left:281px;top:285.2px">200</div><div class="t rl" style="left:281px;top:352.6px">300</div><div class="t rl" style="left:281px;top:420.0px">400</div><div class="t rl" style="left:281px;top:487.4px">500</div>
<svg style="left:301px;top:132px" width="8" height="7" viewBox="0 0 8 7"><path d="M0.5 0.5 V6.5 M1 6 L3.5 2.5 L6.5 6" fill="none" stroke="#222" stroke-width="0.9"/><path d="M2 5.5 L3.5 3.5 L5 5.5 Z" fill="#ddd"/></svg>
<svg style="left:288px;top:357px" width="6" height="8" viewBox="0 0 6 8"><path d="M0.5 0.5 H5.5 M5 1 L1.5 4 L5 7" fill="none" stroke="#222" stroke-width="0.9"/></svg>
<!-- ===== canvas ===== -->
<div class="a" style="left:298px;top:143px;width:477px;height:355px;background:#4e4e4e;border:1px solid #363636"></div>
<div class="a" style="left:299px;top:154px;width:475px;height:323px;background:#fff;border-top:1px solid #2a2a2a"></div>
<div class="a" style="left:299px;top:477px;width:475px;height:1px;background:#333"></div>
<div class="a" style="left:299px;top:488px;width:475px;height:9px;background:#a4a4a4;border-top:1px solid #c8c8c8"></div>
<div class="a" style="left:299px;top:488px;width:9px;height:9px;background:#a6a6a6;border-top:1px solid #f0f0f0;border-left:1px solid #f0f0f0;border-right:1px solid #8a8a8a"></div>
<svg style="left:302px;top:490px" width="3" height="5" viewBox="0 0 3 5"><path d="M3 0 V5 L0 2.5 Z" fill="#222"/></svg>
<div class="a" style="left:308px;top:488px;width:446px;height:9px;background:#a6a6a6;border-top:1px solid #f2f2f2;border-left:1px solid #f2f2f2;border-bottom:1px solid #8a8a8a;border-right:1px solid #8a8a8a"></div>
<div class="a" style="left:765px;top:488px;width:9px;height:9px;background:#a6a6a6;border-top:1px solid #f0f0f0;border-left:1px solid #f0f0f0"></div>
<svg style="left:768px;top:490px" width="3" height="5" viewBox="0 0 3 5"><path d="M0 0 V5 L3 2.5 Z" fill="#222"/></svg>
<svg style="left:476.5px;top:277.1px" width="130" height="77" viewBox="0 0 110 65"><use href="#eyes" transform="scale(1)"/></svg>


<!-- ===== right panel (transform tool) ===== -->
<div class="a" style="left:854px;top:122px;width:8px;height:8px;border:1px solid #7c7c7c;border-radius:1.5px;background:#acacac"></div>
<div class="a" style="left:863px;top:122px;width:8px;height:8px;border:1px solid #7c7c7c;border-radius:1.5px;background:#acacac"></div>
<svg style="left:854px;top:122px" width="18" height="8" viewBox="0 0 18 8"><path d="M2.3 5.8 L5.7 2.3 M3.3 2.3 H5.7 V4.7" stroke="#6e6e6e" stroke-width="1" fill="none"/><path d="M11.5 2 L15 6 M15 2 L11.5 6" stroke="#626262" stroke-width="1.3"/></svg>
<svg style="left:822px;top:138px" width="13" height="13" viewBox="0 0 13 13"><path d="M11.8 0.8 L1.5 5 L4.5 7 L1.5 10.5 L3.3 12.2 L6.3 8.8 L8 11.8 Z" fill="none" stroke="#111" stroke-width="0.9" stroke-linejoin="round"/></svg>
<div class="a hl" style="left:791px;top:155px;width:75px;background:#7e7e7e"></div>
<div class="t pl" style="left:820.5px;top:169px">Flips</div>
<svg style="left:801px;top:183px" width="15" height="7" viewBox="0 0 15 7"><path d="M3 3.5 H12" stroke="#000" stroke-width="1.2"/><path d="M0.5 3.5 L4 0.8 V6.2 Z M14.5 3.5 L11 0.8 V6.2 Z" fill="#000"/></svg>
<svg style="left:824px;top:180px" width="7" height="15" viewBox="0 0 7 15"><path d="M3.5 3 V12" stroke="#000" stroke-width="1.2"/><path d="M3.5 0.5 L0.8 4 H6.2 Z M3.5 14.5 L0.8 11 H6.2 Z" fill="#000"/></svg>
<svg style="left:842px;top:181px" width="12" height="13" viewBox="0 0 12 13"><path d="M2.5 10.5 L9.5 2.5" stroke="#000" stroke-width="1.3"/><path d="M11.5 0.5 L6.5 1.8 L10.2 5.5 Z M0.5 12.5 L1.8 7.5 L5.5 11.2 Z" fill="#000"/></svg>
<div class="a hl" style="left:797px;top:199px;width:63px;background:#7e7e7e"></div>
<div class="t pl" style="left:818.5px;top:207.5px">Order</div>
<svg style="left:800px;top:217px" width="9" height="16" viewBox="0 0 9 16"><path d="M4.5 0.5 V12" stroke="#000" stroke-width="1.2"/><path d="M1.5 9.5 L4.5 13.5 L7.5 9.5 Z" fill="#000"/><path d="M0 15.5 H9" stroke="#000" stroke-width="1"/></svg>
<svg style="left:815px;top:217px" width="10" height="16" viewBox="0 0 10 16"><path d="M5 1 V8" stroke="#000" stroke-width="1.2"/><path d="M2 6.5 L5 10 L8 6.5 Z" fill="#000"/><path d="M2 11.5 H8" stroke="#333" stroke-width="0.8"/><path d="M0 15.5 H10" stroke="#000" stroke-width="1"/></svg>
<svg style="left:831px;top:217px" width="9" height="16" viewBox="0 0 9 16"><path d="M0 0.5 H9" stroke="#000" stroke-width="1"/><path d="M4.5 4 V15.5" stroke="#000" stroke-width="1.2"/><path d="M1.5 6.5 L4.5 2.5 L7.5 6.5 Z" fill="#000"/></svg>
<svg style="left:846px;top:217px" width="10" height="16" viewBox="0 0 10 16"><path d="M0 0.5 H10" stroke="#000" stroke-width="1"/><path d="M2 4.5 H8" stroke="#333" stroke-width="0.8"/><path d="M5 8 V15.5" stroke="#000" stroke-width="1.2"/><path d="M2 9.5 L5 6 L8 9.5 Z" fill="#000"/></svg>
<div class="a hl" style="left:797px;top:237px;width:63px;background:#7e7e7e"></div>
<div class="t pl" style="left:818px;top:244.5px">Group</div>
<svg style="left:809px;top:255px" width="11" height="15" viewBox="0 0 11 15"><path d="M1.5 0.8 L9.5 2 L9.8 14.2 L1.2 13 Z" fill="#444" stroke="#111" stroke-width="0.9"/><path d="M3 2.5 L8 3.2 L8.2 12.5 L3 11.8 Z" fill="#bbb"/><path d="M4 5 H7 V7.5 H4.5 V10 H7.5" fill="none" stroke="#555" stroke-width="0.8"/></svg>
<svg style="left:835px;top:255px" width="11" height="15" viewBox="0 0 11 15"><path d="M1.5 0.8 L6 1.5 M9.5 5 L9.8 14.2 L5 13.5 M1.2 9 L1.2 13 L3 13.3 M1.5 0.8 L1.3 6" fill="none" stroke="#222" stroke-width="1.2"/><path d="M4 4 H7 V7.5 H4.5 V10.5 H7.5" fill="none" stroke="#444" stroke-width="0.9"/></svg>
<div class="a hl" style="left:797px;top:274px;width:63px;background:#7e7e7e"></div>
<div class="t pl" style="left:815px;top:282.5px">Position</div>
<div class="t pl" style="left:796.5px;top:299px">X:</div>
<div class="t pl" style="left:796.5px;top:318px">Y:</div>
<div class="a" style="left:811px;top:295px;width:40px;height:12px;background:#bfbfbf;border-radius:1px"></div><div class="a" style="left:851px;top:295px;width:9px;height:12px;background:#c8c8c8;border-left:1px solid #a8a8a8"></div><svg style="left:852.5px;top:297px" width="6" height="8" viewBox="0 0 6 8"><path d="M0.5 3 L3 0.5 L5.5 3 Z M0.5 5 L3 7.5 L5.5 5 Z" fill="#9a9a9a"/></svg><div class="t" style="left:814px;top:298.00px;font-size:7.84px;color:#9a9a9a;transform:scaleX(0.893);transform-origin:0 0">0</div>
<div class="a" style="left:811px;top:314px;width:40px;height:12px;background:#bfbfbf;border-radius:1px"></div><div class="a" style="left:851px;top:314px;width:9px;height:12px;background:#c8c8c8;border-left:1px solid #a8a8a8"></div><svg style="left:852.5px;top:316px" width="6" height="8" viewBox="0 0 6 8"><path d="M0.5 3 L3 0.5 L5.5 3 Z M0.5 5 L3 7.5 L5.5 5 Z" fill="#9a9a9a"/></svg><div class="t" style="left:814px;top:317.00px;font-size:7.84px;color:#9a9a9a;transform:scaleX(0.893);transform-origin:0 0">0</div>
<div class="a hl" style="left:797px;top:331px;width:63px;background:#7e7e7e"></div>
<div class="a" style="left:791px;top:343px;width:75px;height:14px;border:1px solid #8a8a8a;border-radius:2px;background:linear-gradient(#b8b8b8,#a4a4a4)"></div>
<div class="t pl" style="left:812px;top:347.5px">Show Tips</div>

<!-- ===== center status row ===== -->
<div class="a hl" style="left:244px;top:524px;width:630px;background:#8a8a8a"></div>
<div class="t" style="left:253px;top:511.50px;font-size:8.40px;color:#1c1c2a;transform:scaleX(0.893);transform-origin:0 0">X: 5 Y: 304</div>
<div class="a" style="left:475.5px;top:507px;width:18px;height:15px;border:1px solid #8a8a8a;border-radius:2px;background:linear-gradient(#b6b6b6,#a2a2a2);box-shadow:inset 1px 1px 0 #c4c4c4"></div><div class="a" style="left:498.5px;top:507px;width:18px;height:15px;border:1px solid #8a8a8a;border-radius:2px;background:linear-gradient(#b6b6b6,#a2a2a2);box-shadow:inset 1px 1px 0 #c4c4c4"></div><div class="a" style="left:521.5px;top:507px;width:18px;height:15px;border:1px solid #8a8a8a;border-radius:2px;background:linear-gradient(#b6b6b6,#a2a2a2);box-shadow:inset 1px 1px 0 #c4c4c4"></div><div class="a" style="left:544.5px;top:507px;width:18px;height:15px;border:1px solid #8a8a8a;border-radius:2px;background:linear-gradient(#b6b6b6,#a2a2a2);box-shadow:inset 1px 1px 0 #c4c4c4"></div>
<svg style="left:479px;top:510px" width="11" height="9" viewBox="0 0 11 9"><rect x="0.7" y="0.7" width="9.6" height="7.6" rx="1" fill="none" stroke="#111" stroke-width="1.1"/><path d="M0.7 4.5 H10.3 M5.5 0.7 V8.3" stroke="#333" stroke-width="0.8"/></svg>
<svg style="left:502px;top:510px" width="11" height="9" viewBox="0 0 11 9"><rect x="1.2" y="1" width="8.6" height="7" rx="1.5" fill="none" stroke="#111" stroke-width="1" stroke-dasharray="1.2 0.6"/><rect x="3.5" y="3" width="4" height="3" fill="none" stroke="#333" stroke-width="0.8"/></svg>
<svg style="left:525px;top:510px" width="11" height="10" viewBox="0 0 11 10"><rect x="0.5" y="0.5" width="10" height="9" fill="none" stroke="#111" stroke-width="1"/><path d="M2.5 0.5 V9.5 M4.5 0.5 V9.5 M6.5 0.5 V9.5 M8.5 0.5 V9.5 M0.5 2.5 H10.5 M0.5 4.5 H10.5 M0.5 6.5 H10.5" stroke="#222" stroke-width="0.7"/></svg>
<svg style="left:548px;top:510px" width="11" height="10" viewBox="0 0 11 10"><rect x="0.7" y="0.7" width="9.6" height="8.6" fill="#9a9a9a" stroke="#111" stroke-width="1.2"/><path d="M0.7 9.3 L10.3 0.7" stroke="#111" stroke-width="1.2"/></svg>
<svg style="left:567px;top:510px" width="13" height="9" viewBox="0 0 13 9"><rect x="4.5" y="0.5" width="8" height="5" fill="#aaa" stroke="#111" stroke-width="0.9"/><rect x="0.5" y="3" width="8" height="5.5" fill="#aaa" stroke="#111" stroke-width="0.9"/></svg>
<div class="a" style="left:587px;top:508px;width:26px;height:13px;background:#bdbdbd;border-radius:1px"></div>
<div class="t" style="left:606.5px;top:511.50px;font-size:7.84px;color:#1c1c2a;transform:scaleX(0.893);transform-origin:0 0">1</div>
<svg style="left:618px;top:507px" width="10" height="14" viewBox="0 0 10 14"><circle cx="5.8" cy="4.3" r="3.2" fill="#ccc" stroke="#111" stroke-width="1.3"/><path d="M3.8 7 L1 12.5" stroke="#111" stroke-width="2"/></svg>
<div class="a" style="left:630px;top:508px;width:17px;height:13px;background:#c2c2c2"></div>
<div class="a" style="left:647px;top:508px;width:13px;height:13px;background:#cbcbcb;border-left:1px solid #aaa"></div>
<svg style="left:651px;top:513px" width="6" height="3" viewBox="0 0 6 3"><path d="M0 0 H6 L3 3 Z" fill="#333"/></svg>
<div class="t" style="left:631.5px;top:511.50px;font-size:7.84px;color:#1c1c2a;transform:scaleX(0.893);transform-origin:0 0">100</div>
<div class="t" style="left:662.5px;top:511px;font-size:8px;color:#1c1c2a">%</div>
<svg style="left:674px;top:507px" width="10" height="15" viewBox="0 0 10 15"><rect x="1.5" y="4" width="7" height="7" rx="1.2" fill="#aaa" stroke="#111" stroke-width="1.1"/><path d="M2.5 3 C3.5 1 6.5 1 7.5 2.5 M7.5 12 C6.5 14 3.5 14 2.5 12.5" fill="none" stroke="#111" stroke-width="0.9"/><path d="M7 0.5 L8.5 3 L6 3 Z M3 14.5 L1.5 12 L4 12 Z" fill="#111"/></svg>
<div class="a" style="left:686px;top:508px;width:16px;height:13px;background:#bdbdbd"></div>
<div class="a" style="left:702px;top:508px;width:14px;height:13px;background:#c6c6c6;border-left:1px solid #aaa"></div>
<svg style="left:706px;top:513px" width="6" height="3" viewBox="0 0 6 3"><path d="M0 0 H6 L3 3 Z" fill="#333"/></svg>
<div class="t" style="left:688px;top:511.50px;font-size:7.84px;color:#1c1c2a;transform:scaleX(0.893);transform-origin:0 0">0</div>
<div class="a" style="left:721px;top:509px;width:10px;height:10px;background:#b2b2b2;border:1px solid #8a8a8a"></div>
<svg style="left:722px;top:510px" width="8" height="8" viewBox="0 0 8 8"><path d="M1.5 4 L3.3 6.5 L6.5 1" fill="none" stroke="#111" stroke-width="1.1"/></svg>
<svg style="left:734px;top:510px" width="9" height="9" viewBox="0 0 9 9"><path d="M0.5 8.5 V6 H3 V3.5 H5.5 V1 H8.5 V3 H6 V5.5 H3.5 V8 Z" fill="#111"/><path d="M6 1.5 H8 M3.5 4 H5" stroke="#aaa" stroke-width="0.6"/></svg>
<svg style="left:750px;top:510px" width="12" height="11" viewBox="0 0 12 11"><circle cx="5.8" cy="5.3" r="4.2" fill="none" stroke="#000" stroke-width="1.6"/></svg>
<div class="a" style="left:765px;top:508px;width:13px;height:13px;background:#000;border:1px solid #a8a8a8"></div>
<svg style="left:784px;top:510px" width="12" height="11" viewBox="0 0 12 11"><circle cx="5.8" cy="5.3" r="5" fill="#000"/></svg>
<div class="a" style="left:798px;top:508px;width:14px;height:13px;background:#a0a0a0;border:1px solid #b4b4b4"></div>
<div class="t" style="left:818px;top:510.70px;font-size:8.29px;color:#1c1c2a;transform:scaleX(0.893);transform-origin:0 0">Current Tool</div>
<svg style="left:861px;top:509px" width="11" height="11" viewBox="0 0 13 13"><path d="M11.8 0.8 L1.5 5 L4.5 7 L1.5 10.5 L3.3 12.2 L6.3 8.8 L8 11.8 Z" fill="none" stroke="#222" stroke-width="1" stroke-linejoin="round"/></svg>

<!-- ===== right dock ===== -->
<div class="a" style="left:876px;top:60px;width:17px;height:36px;background:#9e9e9e"></div>
<div class="a vl" style="left:874px;top:59px;height:465px;background:#aaaaaa"></div>
<svg style="left:879px;top:64px" width="11" height="11" viewBox="0 0 11 11"><path d="M0.5 4 L9.5 0.5 L10 2 L1 5.5 Z" fill="#111"/><rect x="0.5" y="6" width="10" height="4.5" fill="#111"/><path d="M1 7.5 H10" stroke="#888" stroke-width="0.6"/></svg>
<svg style="left:879px;top:80px" width="12" height="12" viewBox="0 0 12 12"><rect x="0.5" y="0.5" width="8" height="8" fill="none" stroke="#7a7a7a" stroke-width="0.9"/><path d="M4.5 0.5 V8.5 M0.5 4.5 H8.5" stroke="#7a7a7a" stroke-width="0.8"/><path d="M9 6 L10 8 L12 8.3 L10.5 9.6 L11 11.6 L9 10.5 L7 11.6 L7.5 9.6 L6 8.3 L8 8 Z" fill="#b0b0b0" stroke="#7a7a7a" stroke-width="0.7"/></svg>

<!-- ===== bottom status bar ===== -->
<svg style="left:27px;top:529px" width="12" height="13" viewBox="0 0 12 13"><circle cx="6" cy="7.5" r="4.2" fill="none" stroke="#111" stroke-width="1.3"/><path d="M3.5 3.5 L4 1 L6 2.2" fill="none" stroke="#111" stroke-width="1"/><path d="M4.5 7 L6 8.5 L7.5 7" fill="none" stroke="#555" stroke-width="0.7"/></svg>

<!-- toolbar bottom line -->
<div class="a hl" style="left:5px;top:57px;width:890px;background:#858585"></div>
<div class="a hl" style="left:5px;top:58px;width:890px;background:#b0b0b0"></div>

<div class="a hl" style="left:5px;top:545px;width:890px;background:#8e8e8e"></div>
<!-- status bar top line -->
<div class="a hl" style="left:5px;top:525px;width:890px;background:#b8b8b8"></div>
</body></html>
